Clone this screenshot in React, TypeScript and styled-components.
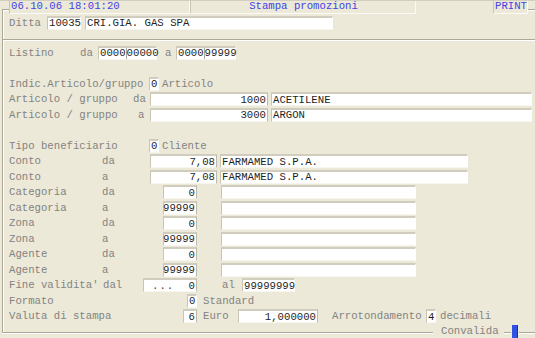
import styled, { createGlobalStyle } from "styled-components";

const GlobalStyle = createGlobalStyle`
  html, body {
    margin: 0;
    padding: 0;
    background: #ece9d8;
  }
`;

const Screen = styled.div`
  width: 535px;
  height: 338px;
  overflow: hidden;
  background: #ece9d8;
  font-family: "Liberation Mono", "Courier New", monospace;
  font-size: 10.67px;
  color: #838383;
  white-space: pre;
`;

const Header = styled.div`
  display: flex;
  height: 14px;
  box-sizing: border-box;
  border-top: 1px solid #d2cfc1;
`;

const Corner = styled.div`
  width: 6px;
  margin: 8px 0 0 2px;
  border-top: 1px solid #aca899;
  border-left: 1px solid #aca899;
  box-shadow: inset 1px 1px #fff;
`;

const HeadCell = styled.div<{ $w: number; $center?: boolean; $plain?: boolean }>`
  flex: none;
  box-sizing: border-box;
  width: ${(p) => p.$w}px;
  line-height: 11px;
  padding-left: 1px;
  color: #4343e4;
  text-align: ${(p) => (p.$center ? "center" : "left")};
  border-left: 1px solid ${(p) => (p.$plain ? "transparent" : "#c9c6b7")};
  border-right: 1px solid ${(p) => (p.$plain ? "transparent" : "#fbfaf4")};
  border-bottom: 1px solid ${(p) => (p.$plain ? "transparent" : "#fbfaf4")};
`;

const HeadTail = styled.div`
  flex: 1;
  margin-top: 8px;
  border-top: 1px solid #aca899;
  box-shadow: inset 0 1px #fff;
`;

const Frame = styled.div`
  margin-left: 2px;
  padding: 1px 0 0 6px;
  border-left: 1px solid #aca899;
  box-shadow: inset 1px 0 #fff;
`;

const Separator = styled.div`
  margin: 8.5px 0 4px -6px;
  border-top: 1px solid #aca899;
  border-bottom: 1px solid #fff;
`;

const Row = styled.div`
  display: flex;
  align-items: center;
  height: 15.5px;
`;

const Cell = styled.span<{ $w?: number; $pl?: number }>`
  flex: none;
  box-sizing: border-box;
  width: ${(p) => (p.$w ? `${p.$w}px` : "auto")};
  padding-left: ${(p) => p.$pl ?? 0}px;
  line-height: 12px;
`;

const Field = styled.span<{ $w: number; $right?: boolean; $ml?: number }>`
  flex: none;
  display: inline-flex;
  align-items: center;
  justify-content: ${(p) => (p.$right ? "flex-end" : "flex-start")};
  box-sizing: border-box;
  width: ${(p) => p.$w}px;
  height: 14px;
  margin-left: ${(p) => p.$ml ?? 0}px;
  padding: 0 1px;
  background: #fff;
  color: #1f1f1f;
  border-top: 2px solid #d0ccbe;
  border-left: 1px solid #c9c5b6;
  border-right: 1px solid ${(p) => (p.$right ? "#bdb9aa" : "#fff")};
  border-bottom: 1px solid #f6f5ee;
`;

const DateField = styled(Field)`
  justify-content: space-between;
  padding-left: 8px;
`;

const Dots = styled.span`
  letter-spacing: 1px;
  color: #444;
`;

const Tick = styled.span`
  display: inline-block;
  height: 11px;
  border-left: 1px solid #aca899;
`;

const Footer = styled.div`
  display: flex;
  align-items: center;
  height: 18px;
`;

const FooterCorner = styled.div`
  align-self: flex-start;
  width: 431px;
  height: 9px;
  margin-left: 2px;
  box-sizing: border-box;
  border-left: 1px solid #aca899;
  border-bottom: 1px solid #aca899;
  box-shadow: inset 1px 0 #fff, 0 1px #fff;
`;

const Legend = styled.span`
  padding: 0 5px 0 8px;
  margin-bottom: 3px;
  line-height: 11px;
`;

const Line = styled.div<{ $w?: number }>`
  flex: ${(p) => (p.$w ? "none" : "1")};
  width: ${(p) => (p.$w ? `${p.$w}px` : "auto")};
  border-top: 1px solid #aca899;
  border-bottom: 1px solid #fff;
`;

const Caret = styled.div`
  flex: none;
  width: 6px;
  height: 13px;
  margin: 0 1px 3px;
  background: #3152e0;
  border-right: 1px solid #1d2f9a;
  box-sizing: border-box;
`;

const ranges = [
  { label: "Categoria", da: "0", a: "99999" },
  { label: "Zona", da: "0", a: "99999" },
  { label: "Agente", da: "0", a: "99999" },
];

export default function App() {
  return (
    <Screen>
      <GlobalStyle />
      <Header>
        <Corner />
        <HeadCell $w={181}>06.10.06 18:01:20</HeadCell>
        <HeadCell $w={226} $center>
          Stampa promozioni
        </HeadCell>
        <HeadCell $w={77} $plain />
        <HeadCell $w={35}>PRINT</HeadCell>
        <HeadTail />
      </Header>

      <Frame>
        <Row>
          <Cell $w={38}>Ditta</Cell>
          <Field $w={34}>10035</Field>
          <Field $w={248} $ml={4}>
            CRI.GIA. GAS SPA
          </Field>
        </Row>

        <Separator />

        <Row>
          <Cell $w={71}>Listino</Cell>
          <Cell $w={18}>da</Cell>
          <Field $w={59}>
            0000
            <Tick />
            00000
          </Field>
          <Cell $w={19} $pl={8}>
            a
          </Cell>
          <Field $w={60}>
            0000
            <Tick />
            99999
          </Field>
        </Row>

        <Row />

        <Row>
          <Cell $w={140}>Indic.Articolo/gruppo</Cell>
          <Field $w={10}>0</Field>
          <Cell $pl={3}>Articolo</Cell>
        </Row>
        <Row>
          <Cell $w={124}>Articolo / gruppo</Cell>
          <Cell $w={17}>da</Cell>
          <Field $w={118} $right>
            1000
          </Field>
          <Field $w={261} $ml={3}>
            ACETILENE
          </Field>
        </Row>
        <Row>
          <Cell $w={124}>Articolo / gruppo</Cell>
          <Cell $w={17} $pl={5}>
            a
          </Cell>
          <Field $w={118} $right>
            3000
          </Field>
          <Field $w={261} $ml={3}>
            ARGON
          </Field>
        </Row>

        <Row />

        <Row>
          <Cell $w={140}>Tipo beneficiario</Cell>
          <Field $w={10}>0</Field>
          <Cell $pl={3}>Cliente</Cell>
        </Row>
        {["da", "a"].map((k) => (
          <Row key={k}>
            <Cell $w={93}>Conto</Cell>
            <Cell $w={48}>{k}</Cell>
            <Field $w={67} $right>
              7,08
            </Field>
            <Field $w={248} $ml={3}>
              FARMAMED S.P.A.
            </Field>
          </Row>
        ))}
        {ranges.map((r) =>
          (["da", "a"] as const).map((k) => (
            <Row key={r.label + k}>
              <Cell $w={93}>{r.label}</Cell>
              <Cell $w={61}>{k}</Cell>
              <Field $w={34} $right>
                {r[k]}
              </Field>
              <Field $w={195} $ml={24} />
            </Row>
          ))
        )}
        <Row>
          <Cell $w={94}>Fine validita'</Cell>
          <Cell $w={40}>dal</Cell>
          <DateField $w={54} $right>
            <Dots>...</Dots>
            <span>0</span>
          </DateField>
          <Cell $w={45} $pl={25}>
            al
          </Cell>
          <Field $w={53}>99999999</Field>
        </Row>
        <Row>
          <Cell $w={178}>Formato</Cell>
          <Field $w={10}>0</Field>
          <Cell $pl={6}>Standard</Cell>
        </Row>
        <Row>
          <Cell $w={174}>Valuta di stampa</Cell>
          <Field $w={14} $right>
            6
          </Field>
          <Cell $w={41} $pl={6}>
            Euro
          </Cell>
          <Field $w={80} $right>
            1,000000
          </Field>
          <Cell $w={108} $pl={14}>
            Arrotondamento
          </Cell>
          <Field $w={10}>4</Field>
          <Cell $pl={4}>decimali</Cell>
        </Row>
      </Frame>

      <Footer>
        <FooterCorner />
        <Legend>Convalida</Legend>
        <Line $w={7} />
        <Caret />
        <Line />
      </Footer>
    </Screen>
  );
}
